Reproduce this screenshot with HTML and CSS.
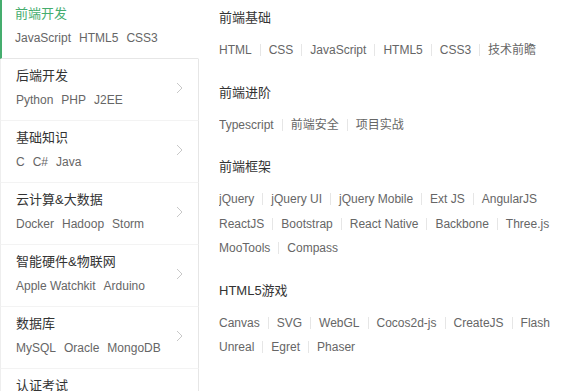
FILE: index.html
```html
<!DOCTYPE html>
<html lang="zh-CN">
<head>
    <meta charset="UTF-8">
    <meta name="viewport" content="width=device-width, initial-scale=1.0">
    <title>课程分类</title>
    <link rel="stylesheet" href="styles.css">
</head>
<body>
    <div class="page">
        <ul class="menu">
            <li class="menu-item active">
                <div class="menu-text">
                    <div class="menu-title">前端开发</div>
                    <div class="menu-sub"><span>JavaScript</span><span>HTML5</span><span>CSS3</span></div>
                </div>
            </li>
            <li class="menu-item">
                <div class="menu-text">
                    <div class="menu-title">后端开发</div>
                    <div class="menu-sub"><span>Python</span><span>PHP</span><span>J2EE</span></div>
                </div>
                <svg class="arrow" width="7" height="12" viewBox="0 0 7 12"><polyline points="1,1 6,6 1,11" /></svg>
            </li>
            <li class="menu-item">
                <div class="menu-text">
                    <div class="menu-title">基础知识</div>
                    <div class="menu-sub"><span>C</span><span>C#</span><span>Java</span></div>
                </div>
                <svg class="arrow" width="7" height="12" viewBox="0 0 7 12"><polyline points="1,1 6,6 1,11" /></svg>
            </li>
            <li class="menu-item">
                <div class="menu-text">
                    <div class="menu-title">云计算&amp;大数据</div>
                    <div class="menu-sub"><span>Docker</span><span>Hadoop</span><span>Storm</span></div>
                </div>
                <svg class="arrow" width="7" height="12" viewBox="0 0 7 12"><polyline points="1,1 6,6 1,11" /></svg>
            </li>
            <li class="menu-item">
                <div class="menu-text">
                    <div class="menu-title">智能硬件&amp;物联网</div>
                    <div class="menu-sub"><span>Apple Watchkit</span><span>Arduino</span></div>
                </div>
                <svg class="arrow" width="7" height="12" viewBox="0 0 7 12"><polyline points="1,1 6,6 1,11" /></svg>
            </li>
            <li class="menu-item">
                <div class="menu-text">
                    <div class="menu-title">数据库</div>
                    <div class="menu-sub"><span>MySQL</span><span>Oracle</span><span>MongoDB</span></div>
                </div>
                <svg class="arrow" width="7" height="12" viewBox="0 0 7 12"><polyline points="1,1 6,6 1,11" /></svg>
            </li>
            <li class="menu-item">
                <div class="menu-text">
                    <div class="menu-title">认证考试</div>
                </div>
            </li>
        </ul>

        <div class="content">
            <div class="section">
                <h3>前端基础</h3>
                <div class="tags-wrap">
                    <div class="tags">
                        <a class="tag">HTML</a><a class="tag">CSS</a><a class="tag">JavaScript</a><a class="tag">HTML5</a><a class="tag">CSS3</a><a class="tag">技术前瞻</a>
                    </div>
                </div>
            </div>
            <div class="section">
                <h3>前端进阶</h3>
                <div class="tags-wrap">
                    <div class="tags">
                        <a class="tag">Typescript</a><a class="tag">前端安全</a><a class="tag">项目实战</a>
                    </div>
                </div>
            </div>
            <div class="section">
                <h3>前端框架</h3>
                <div class="tags-wrap">
                    <div class="tags">
                        <a class="tag">jQuery</a><a class="tag">jQuery UI</a><a class="tag">jQuery Mobile</a><a class="tag">Ext JS</a><a class="tag">AngularJS</a><a class="tag">ReactJS</a><a class="tag">Bootstrap</a><a class="tag">React Native</a><a class="tag">Backbone</a><a class="tag">Three.js</a><a class="tag">MooTools</a><a class="tag">Compass</a>
                    </div>
                </div>
            </div>
            <div class="section">
                <h3>HTML5游戏</h3>
                <div class="tags-wrap">
                    <div class="tags">
                        <a class="tag">Canvas</a><a class="tag">SVG</a><a class="tag">WebGL</a><a class="tag">Cocos2d-js</a><a class="tag">CreateJS</a><a class="tag">Flash</a><a class="tag">Unreal</a><a class="tag">Egret</a><a class="tag">Phaser</a>
                    </div>
                </div>
            </div>
        </div>
    </div>
</body>
</html>
```

FILE: styles.css
```css
body {
    margin: 0;
    padding: 0;
    font-family: "Liberation Sans", "Noto Sans CJK SC", sans-serif;
    background: #fff;
    color: #333;
    overflow: hidden;
}
.page {
    display: flex;
    align-items: flex-start;
}

/* left menu */
.menu {
    list-style: none;
    margin: 0;
    padding: 0;
    width: 199px;
    flex-shrink: 0;
}
.menu-item {
    display: flex;
    justify-content: space-between;
    align-items: center;
    height: 62px;
    box-sizing: border-box;
    padding: 0 15px 3px 15px;
    border-left: 1px solid #eee;
    border-right: 1px solid #e6e6e6;
    border-bottom: 1px solid #f3f3f3;
    background: #fff;
}
.menu-item.active {
    height: 59px;
    padding: 0 15px 6px 13px;
    border-left: 2px solid #45ad6e;
    border-right-color: #fff;
    border-bottom: 1px solid #e6e6e6;
}
.menu-item:last-child {
    align-items: flex-start;
    padding-top: 7px;
}
.menu-title {
    font-size: 13px;
    line-height: 20px;
    color: #333;
}
.active .menu-title {
    color: #45ad6e;
}
.menu-sub {
    margin-top: 4px;
    font-size: 12px;
    line-height: 20px;
    color: #666;
    display: flex;
    gap: 8px;
    white-space: nowrap;
}
.arrow {
    fill: none;
    stroke: #c8c8c8;
    stroke-width: 1;
}

/* right content */
.content {
    padding: 8px 0 0 20px;
}
.section {
    margin-bottom: 20px;
}
.section h3 {
    margin: 0;
    font-size: 13px;
    font-weight: normal;
    line-height: 20px;
    color: #333;
}
.tags-wrap {
    margin-top: 10px;
    width: 350px;
    overflow: hidden;
}
/* separators at the start of each row slide out of view */
.tags {
    margin-left: -17px;
    display: flex;
    flex-wrap: wrap;
}
.tag {
    display: flex;
    align-items: center;
    font-size: 12px;
    line-height: 24.5px;
    color: #666;
    white-space: nowrap;
    cursor: pointer;
}
.tag::before {
    content: "";
    display: block;
    width: 1px;
    height: 12px;
    background: #e6e6e6;
    margin: 0 8px;
}
```
